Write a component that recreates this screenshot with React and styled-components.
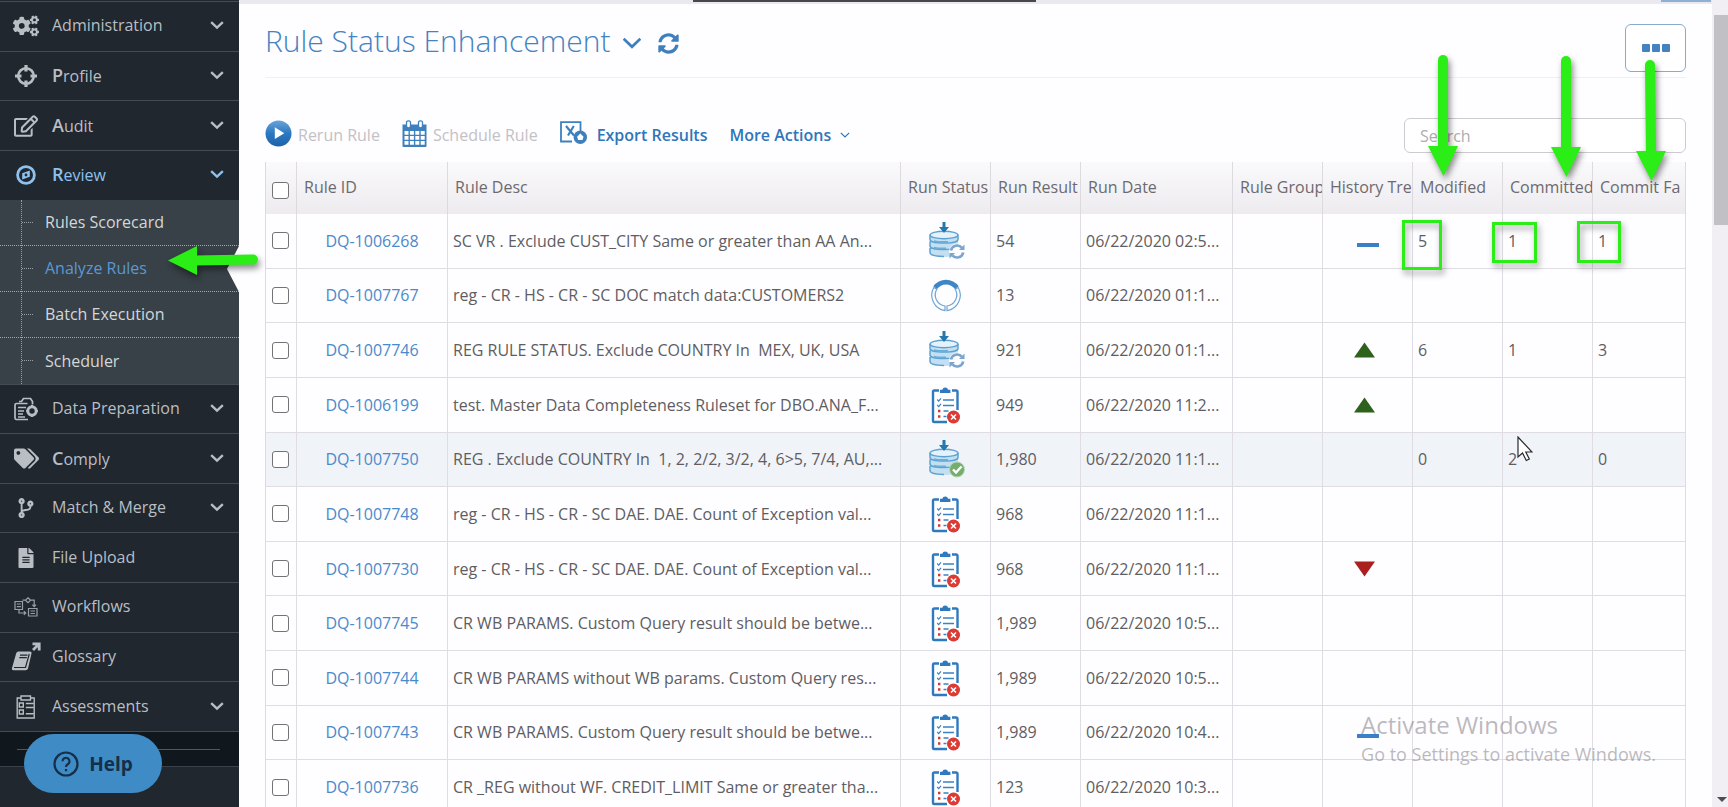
import { useState } from "react";
import styled, { createGlobalStyle, css } from "styled-components";
import {
  FaCogs,
  FaRegEdit,
  FaTags,
  FaCodeBranch,
  FaFileAlt,
  FaSyncAlt,
} from "react-icons/fa";

const GlobalStyle = createGlobalStyle`
  *, *::before, *::after {
    box-sizing: border-box;
  }
  body {
    margin: 0;
    overflow: hidden;
    background: #fefdff;
    color: #5e5d62;
    font-family: "Open Sans", sans-serif;
    font-size: 16px;
  }
  button, input {
    font-family: inherit;
  }
`;

/* ---------- icons ---------- */

const Chevron = ({ size = 12, stroke = 2 }) => (
  <svg width={size} height={size} viewBox="0 0 12 12" fill="none" aria-hidden="true">
    <path d="M1 3.5 6 8.3 11 3.5" stroke="currentColor" strokeWidth={stroke} />
  </svg>
);

const CrosshairsIcon = () => (
  <svg width="24" height="24" viewBox="0 0 24 24" fill="none" stroke="currentColor" aria-hidden="true">
    <circle cx="12" cy="12" r="7.800" strokeWidth="2.600" />
    <path d="M12 1v6.500M12 16.500V23M1 12h6.500M16.500 12H23" strokeWidth="3.200" />
  </svg>
);

const CompassIcon = () => (
  <svg width="20" height="20" viewBox="0 0 20 20" fill="none" aria-hidden="true">
    <circle cx="10" cy="10" r="8.4" stroke="currentColor" strokeWidth="2.8" />
    <path d="M6.2 14.4V8.2L13.8 5.4V11.8Z" fill="currentColor" />
    <circle cx="10" cy="10" r="1.4" fill="#20272f" />
  </svg>
);

const DataPrepIcon = () => (
  <svg width="24" height="24" viewBox="0 0 24 24" fill="none" stroke="currentColor" strokeWidth="1.7" aria-hidden="true">
    <path d="M5 4.500h2.500L9.500 1.500h7l2 3v3" />
    <path d="M13.500 6.500H2.500a1.500 1.500 0 0 0-1.500 1.500v13a1.500 1.500 0 0 0 1.500 1.500H14" />
    <path d="M4 10.500h8M4 14h6M4 17h5M4 20h7" strokeWidth="1.400" />
    <circle cx="18" cy="14" r="4.200" strokeWidth="3" />
    <path d="M18 8v2M18 18v2M12.200 14h2M21.800 14h2" strokeWidth="2" />
  </svg>
);

const WorkflowIcon = () => (
  <svg width="24" height="20" viewBox="0 0 24 20" fill="none" stroke="currentColor" strokeWidth="1.2" opacity="0.8" aria-hidden="true">
    <path d="M1 4.500h7.500v8H1zM2.800 7h4M2.800 9.600h4" />
    <path d="M14.500 11.500h8.500v7.500h-8.500zM16.500 14h4.500M16.500 16.500h4.500" />
    <path d="M14 .8l2.600 2.400L14 5.600l-2.600-2.400zM8.500 3.200h2.500M17 3.200h3.200v6M18.400 7.600l1.800 2 1.800-2" />
    <path d="M5 13v3h6.500M9.800 14.300l2 1.700-2 1.700" />
  </svg>
);

const GlossaryIcon = () => (
  <svg width="30" height="30" viewBox="0 0 30 30" fill="none" aria-hidden="true">
    <path d="M7.500 9.500H19a1.600 1.600 0 0 1 1.500 2L17 26.500a2.500 2.500 0 0 1-2.300 1.700H2.600A1.800 1.800 0 0 1 1 25.900L5.200 11.300a2.600 2.600 0 0 1 2.300-1.800z" fill="currentColor" />
    <path d="M9 13.200h7.500M8.300 15.600h7.500M3 25.500h11.500l3.800-13.500" stroke="#20272f" strokeWidth="1.200" />
    <path d="M22 8 27 3M21.500 1.800H28.200V8.500" stroke="currentColor" strokeWidth="2.800" />
  </svg>
);

const AssessmentIcon = () => (
  <svg width="20" height="24" viewBox="0 0 20 24" fill="none" stroke="currentColor" strokeWidth="1.400" aria-hidden="true">
    <path d="M5 3H1.200v20h17V3H14.500" />
    <path d="M5 1h9.500v4H5z" />
    <path d="M3.300 8h4v4h-4zM3.300 15h4v4h-4zM9.800 8.500h8M9.800 12.500h8M9.800 18.700h8" />
  </svg>
);

const PlayIcon = () => (
  <svg width="27" height="27" viewBox="0 0 27 27" aria-hidden="true">
    <defs>
      <linearGradient id="play" x1="0" y1="0" x2="0" y2="1">
        <stop offset="0" stopColor="#6aa3d6" />
        <stop offset="0.5" stopColor="#2b78c2" />
        <stop offset="1" stopColor="#1f62a8" />
      </linearGradient>
    </defs>
    <circle cx="13.500" cy="13.500" r="13" fill="url(#play)" />
    <path d="M9.800 7.300v11.800l9.500-5.900z" fill="#fff" />
  </svg>
);

const CalendarIcon = () => (
  <svg width="25" height="27" viewBox="0 0 25 27" aria-hidden="true">
    <path d="M.5 4.500h24V26a1 1 0 0 1-1 1h-22a1 1 0 0 1-1-1z" fill="#3e80be" />
    <rect x="4.500" y=".8" width="4" height="7" rx="1.800" fill="#fff" stroke="#3e80be" strokeWidth="1.300" />
    <rect x="16.500" y=".8" width="4" height="7" rx="1.800" fill="#fff" stroke="#3e80be" strokeWidth="1.300" />
    <path
      fill="#fff"
      d="M2.500 11h4v3.700h-4zM7.900 11h4v3.700h-4zM13.300 11h4v3.700h-4zM18.700 11h4v3.700h-4zM2.500 16h4v3.700h-4zM7.900 16h4v3.700h-4zM13.300 16h4v3.700h-4zM18.700 16h4v3.700h-4zM2.500 21h4v3.700h-4zM7.900 21h4v3.700h-4zM13.300 21h4v3.700h-4zM18.700 21h4v3.700h-4z"
    />
  </svg>
);

const ExportIcon = () => (
  <svg width="27" height="24" viewBox="0 0 27 24" fill="none" aria-hidden="true">
    <path d="M12 20.500H1V1.200h19.500v9" stroke="#3e80be" strokeWidth="1.800" />
    <path d="M6 5l8 9.500M13.800 5 8 14.500" stroke="#3e80be" strokeWidth="2.200" />
    <circle cx="20.300" cy="16.200" r="6.700" fill="#3e80be" />
    <path d="M20.300 12.500l3.200 3.200-1 3.300h-4.400l-1-3.300z" fill="#fff" />
  </svg>
);

const DatabaseIcon = ({ badge }) => (
  <svg width="38" height="38" viewBox="0 0 38 38" fill="none" aria-hidden="true">
    <path d="M3 13v17c0 3 6 5 14 5s14-2 14-5V13" fill="#c3e0f3" />
    <ellipse cx="17" cy="13" rx="14" ry="3.800" fill="#e4f2fb" stroke="#5fa2d1" strokeWidth="1.400" />
    <path
      d="M3 13v4.500c0 2.200 6 3.600 14 3.600s14-1.400 14-3.600V13M3 19.500V24c0 2.200 6 3.600 14 3.600s12-.800 14-2.600M3 26v4.500C3 33 9 34.400 17 34.400"
      stroke="#5fa2d1"
      strokeWidth="1.500"
    />
    <path d="M7 19c4 1 9 1 14 .700M7 25.500c4 1 8 1 12 .700" stroke="#6badd9" strokeWidth="1.600" />
    <path d="M15.500 0h3v5h3.500l-5 6-5-6h3.500z" fill="#2378ae" />
    {badge === "sync" ? (
      <>
        <circle cx="30" cy="29.500" r="8" fill="#fdfdff" />
        <path d="M24 28.500a6.200 6.200 0 0 1 10.800-2.800M36.200 30.500a6.200 6.200 0 0 1-10.800 2.800" stroke="#7ba4cf" strokeWidth="2.600" />
        <path d="M37.500 22.500v5.500h-5.500zM22.500 36.500V31H28z" fill="#7ba4cf" />
      </>
    ) : (
      <>
        <circle cx="30" cy="29.500" r="7.500" fill="#74ad6c" stroke="#b9d6b6" strokeWidth="1" />
        <path d="M26 29.500l3 3 5.500-6" stroke="#fff" strokeWidth="2.400" />
      </>
    )}
  </svg>
);

const RunningIcon = () => (
  <svg width="34" height="34" viewBox="0 0 34 34" fill="none" aria-hidden="true">
    <path
      d="M4.800 9.500A15.600 15.600 0 0 0 16 32.600V28A11.200 11.200 0 0 1 7.800 11.200zM29.200 9.500A15.600 15.600 0 0 1 18 32.600V28a11.200 11.200 0 0 0 8.200-16.800z"
      stroke="#6fa6d6"
      strokeWidth="1.200"
    />
    <path d="M4.300 8.300a15.700 15.700 0 0 1 25.400 0L26 11a11.300 11.300 0 0 0-18 0z" fill="#3f86c6" />
  </svg>
);

const ClipboardIcon = () => (
  <svg width="38" height="38" viewBox="0 0 38 38" fill="none" aria-hidden="true">
    <path d="M6 5h25v31H6z" fill="#fff" />
    <path d="M12 4.500H7.300A1.300 1.300 0 0 0 6 5.800v28.900A1.300 1.300 0 0 0 7.300 36H20M25 4.500h4.200a1.300 1.300 0 0 1 1.300 1.300V24" stroke="#2f7abf" strokeWidth="2.400" />
    <path d="M13 7V3.800h2.300a3 3 0 0 1 5.800 0h2.300V7z" fill="#2f7abf" />
    <path d="M16 14h11M16 19.500h11M16.500 25h5M16.500 30.500h3" stroke="#3b82c4" strokeWidth="1.500" />
    <path d="M10.200 13.500l1.500 1.600 2.300-2.800M10.200 19l1.500 1.600 2.300-2.800" stroke="#3b82c4" strokeWidth="1.200" />
    <path d="M11 23.800h2.400v2.400H11zM11 29.300h2.400v2.400H11z" fill="#d8352f" />
    <circle cx="26.500" cy="31" r="6.500" fill="#dc3a34" />
    <path d="M24 28.500l5 5M29 28.500l-5 5" stroke="#fff" strokeWidth="1.600" />
  </svg>
);

const TrendIcon = ({ trend }) => (
  <svg width="30" height="16" viewBox="0 0 30 16" aria-hidden="true">
    {trend === "up" && <path d="M1 15.500 11.500.5 22 15.500z" fill="#2d611c" />}
    {trend === "down" && <path d="M1 .5h21L11.500 15.500z" fill="#a8211f" />}
    {trend === "flat" && <path d="M4 10h22v4H4z" fill="#3a80c8" />}
  </svg>
);

/* ---------- shell ---------- */

const Page = styled.div`
  position: relative;
  display: flex;
  height: 100vh;
  overflow: hidden;
`;

const Sidebar = styled.nav`
  display: flex;
  flex-direction: column;
  flex: none;
  width: 239px;
  background: #20272f;
  padding-top: 1px;
`;

const NavItem = styled.a`
  display: flex;
  flex: 1 0 40px;
  align-items: center;
  border-top: 1px solid #444c54;
  padding-right: 15px;
  padding-bottom: 2px;
  color: ${(p) => (p.$active ? "#8fc1ee" : "#b9bec4")};
  text-decoration: none;

  > span {
    flex: 1;
  }
`;

const NavIcon = styled.i`
  display: flex;
  justify-content: center;
  width: 52px;
  padding-top: 2px;
  font-size: 24px;
`;

const Initial = styled.b`
  font-size: 18px;
  font-weight: 600;
`;

const SubMenu = styled.div`
  flex: none;
  position: relative;
  background: #384147;

  &::before {
    content: "";
    position: absolute;
    top: 0;
    bottom: 0;
    left: 21px;
    border-left: 1px dotted #98a0a6;
  }
`;

const SubItem = styled.a`
  position: relative;
  display: flex;
  align-items: center;
  height: 46px;
  padding-left: 45px;
  border-bottom: 1px dotted #a0a7ac;
  color: ${(p) => (p.$active ? "#5a98d4" : "#d3d7da")};
  text-decoration: none;

  &:last-child {
    border-bottom: 0;
  }

  &::before {
    content: "";
    position: absolute;
    left: 22px;
    width: 11px;
    border-top: 1px dotted #98a0a6;
  }

  ${(p) =>
    p.$active &&
    css`
      &::after {
        content: "";
        position: absolute;
        right: 0;
        top: 0;
        border: solid transparent;
        border-width: 23px 12px 23px 0;
        border-right-color: #fefdff;
      }
    `}
`;

const SidebarFoot = styled.div`
  flex: none;
  height: 76px;
  border-top: 1px solid #444c54;

  &::before {
    content: "";
    display: block;
    height: 35px;
    border-bottom: 1px solid #39424a;
    background: linear-gradient(#4c5a5f, #4c5a5f) 17px 17px / 203px 1px no-repeat #11181d;
  }
`;

const HelpButton = styled.button`
  position: absolute;
  left: 24px;
  bottom: 14px;
  display: flex;
  align-items: center;
  justify-content: center;
  gap: 10px;
  width: 138px;
  height: 59px;
  border: 0;
  border-radius: 30px;
  background: #3f8bc6;
  color: #142f49;
  font-size: 19px;
  font-weight: 700;
`;

const Main = styled.main`
  flex: 1;
  min-width: 0;
  border-top: 4px solid #eae9ef;
  padding: 0 26px;
`;

const Scrollbar = styled.div`
  display: flex;
  flex-direction: column;
  align-items: flex-end;
  justify-content: space-between;
  flex: none;
  width: 16px;
  padding: 15px 0 5px 2px;
  background: #f1eff4;
`;

const Thumb = styled.div`
  width: 100%;
  height: 210px;
  background: #c1c0c4;
`;

const DownArrow = styled.div`
  margin-right: 1px;
  border: 5px solid transparent;
  border-top-color: #4e4e52;
  border-bottom: 0;
`;

/* ---------- header and toolbar ---------- */

const Header = styled.header`
  display: flex;
  align-items: center;
  height: 74px;
  padding-top: 5px;
  border-bottom: 1px solid #f1eff4;
  color: #4583c0;

  h1 {
    margin: 0 12px 0 0;
    padding-bottom: 4px;
    font-size: 30px;
    font-weight: 300;
    line-height: 40px;
  }
`;

const IconButton = styled.button`
  display: flex;
  padding: 0;
  margin-right: 16px;
  border: 0;
  background: none;
  color: #3e80be;
  font-size: 21px;
`;

const DotsButton = styled.button`
  display: flex;
  align-items: center;
  justify-content: center;
  gap: 2px;
  width: 61px;
  height: 48px;
  margin: 10px 0 0 auto;
  border: 1px solid #86abd0;
  border-radius: 6px;
  background: #fff;

  i {
    width: 8px;
    height: 8px;
    border-radius: 1px;
    background: #4583c0;
  }
`;

const Toolbar = styled.div`
  display: flex;
  align-items: center;
  height: 84px;
  padding-top: 31px;
`;

const ToolButton = styled.button`
  display: flex;
  align-items: center;
  gap: ${(p) => p.$gap || 6}px;
  height: 32px;
  margin: 0 22px 5px 0;
  padding: 0;
  border: 0;
  background: none;
  color: #2e76ba;
  font-size: 16px;
  font-weight: 600;
  white-space: nowrap;

  &:disabled {
    color: #c3c1c6;
    font-weight: 400;
  }

  span {
    padding-top: 4px;
  }

  span + svg {
    margin-top: 4px;
  }
`;

const SearchInput = styled.input`
  width: 282px;
  height: 35px;
  margin-left: auto;
  padding: 0 15px;
  border: 1px solid #cdcbd1;
  border-radius: 6px;
  background: #fff;
  font-size: 16px;

  &::placeholder {
    color: #aeacb1;
  }
`;

/* ---------- grid ---------- */

const Table = styled.table`
  width: 100%;
  height: calc(100vh - 154px);
  table-layout: fixed;
  border-collapse: separate;
  border-spacing: 0;
  border-left: 1px solid #dcd9df;
`;

const Th = styled.th`
  height: 52px;
  padding: ${(p) => (p.$check ? "4px 0 0 6px" : "0 0 2px 7px")};
  border-right: 1px solid #dcd9df;
  background: linear-gradient(#faf9fb, #edebef);
  color: #6c6a70;
  font-weight: 500;
  text-align: left;
  white-space: nowrap;
  overflow: hidden;
`;

const Td = styled.td`
  height: 54px;
  padding: 0 ${(p) => (p.$check ? 6 : 5)}px;
  border-right: 1px solid #e0dce3;
  border-bottom: 1px solid #e0dce3;
  text-align: ${(p) => p.$align || "left"};
  white-space: pre;
  overflow: hidden;
  text-overflow: ellipsis;

  svg {
    display: block;
    margin: 0 auto;
  }
`;

const Tr = styled.tr`
  background: ${(p) => (p.$hovered ? "#f0f3f8" : "transparent")};
`;

const RuleLink = styled.a`
  color: #4a8acb;
  text-decoration: none;
`;

const Checkbox = styled.input.attrs({ type: "checkbox" })`
  appearance: none;
  display: block;
  width: 17px;
  height: 17px;
  margin: 0;
  border: 1px solid #737277;
  border-radius: 3px;
  background: #fff;

  &:checked {
    background: #3e80be;
  }
`;

/* ---------- overlays ---------- */

const Annotation = styled.svg`
  position: absolute;
  top: ${(p) => p.$top}px;
  ${(p) => (p.$left ? `left: ${p.$left}px;` : `right: ${p.$right}px;`)}
  overflow: visible;
  pointer-events: none;
  filter: drop-shadow(2px 4px 3px rgba(0, 0, 0, 0.45));
`;

const Highlight = styled.div`
  position: absolute;
  top: ${(p) => p.$top}px;
  right: ${(p) => p.$right}px;
  width: ${(p) => p.$width}px;
  height: ${(p) => p.$height}px;
  border: 3px solid #2bee16;
  pointer-events: none;
  filter: drop-shadow(2px 4px 3px rgba(0, 0, 0, 0.4));
`;

const Watermark = styled.div`
  position: absolute;
  right: 72px;
  bottom: 40px;
  color: rgba(120, 118, 124, 0.5);
  font-size: 18px;
  line-height: 26px;
  pointer-events: none;

  strong {
    display: block;
    font-size: 24px;
    font-weight: 400;
    line-height: 32px;
  }
`;

const Cursor = styled.svg`
  position: absolute;
  top: 436px;
  right: 195px;
  pointer-events: none;
`;

const TopTab = styled.div`
  position: absolute;
  top: 0;
  right: ${(p) => p.$right}px;
  width: ${(p) => p.$width}px;
  height: 2px;
  background: ${(p) => p.$color};
`;

const navTop = [
  { label: "Administration", icon: <FaCogs size={26} />, open: true },
  { label: "Profile", icon: <CrosshairsIcon />, open: true, initial: true },
  { label: "Audit", icon: <FaRegEdit />, open: true, initial: true },
  { label: "Review", icon: <CompassIcon />, open: true, initial: true, active: true },
];

const subNav = ["Rules Scorecard", "Analyze Rules", "Batch Execution", "Scheduler"];

const navBottom = [
  { label: "Data Preparation", icon: <DataPrepIcon />, open: true },
  { label: "Comply", icon: <FaTags size={25} />, open: true, initial: true },
  { label: "Match & Merge", icon: <FaCodeBranch size={20} />, open: true },
  { label: "File Upload", icon: <FaFileAlt size={20} /> },
  { label: "Workflows", icon: <WorkflowIcon /> },
  { label: "Glossary", icon: <GlossaryIcon /> },
  { label: "Assessments", icon: <AssessmentIcon />, open: true },
];

const columns = [
  { label: "Rule ID", width: 151 },
  { label: "Rule Desc" },
  { label: "Run Status", width: 90 },
  { label: "Run Result", width: 90 },
  { label: "Run Date", width: 152 },
  { label: "Rule Group", width: 90 },
  { label: "History Tre", width: 90 },
  { label: "Modified", width: 90 },
  { label: "Committed", width: 90 },
  { label: "Commit Fa", width: 93 },
];

const rules = [
  { id: "DQ-1006268", desc: "SC VR . Exclude CUST_CITY Same or greater than AA An...", status: "sync", result: "54", date: "06/22/2020 02:5...", trend: "flat", counts: [5, 1, 1] },
  { id: "DQ-1007767", desc: "reg - CR - HS - CR - SC DOC match data:CUSTOMERS2", status: "running", result: "13", date: "06/22/2020 01:1..." },
  { id: "DQ-1007746", desc: "REG RULE STATUS. Exclude COUNTRY In  MEX, UK, USA", status: "sync", result: "921", date: "06/22/2020 01:1...", trend: "up", counts: [6, 1, 3] },
  { id: "DQ-1006199", desc: "test. Master Data Completeness Ruleset for DBO.ANA_F...", status: "failed", result: "949", date: "06/22/2020 11:2...", trend: "up" },
  { id: "DQ-1007750", desc: "REG . Exclude COUNTRY In  1, 2, 2/2, 3/2, 4, 6>5, 7/4, AU,...", status: "done", result: "1,980", date: "06/22/2020 11:1...", counts: [0, 2, 0], hovered: true },
  { id: "DQ-1007748", desc: "reg - CR - HS - CR - SC DAE. DAE. Count of Exception val...", status: "failed", result: "968", date: "06/22/2020 11:1..." },
  { id: "DQ-1007730", desc: "reg - CR - HS - CR - SC DAE. DAE. Count of Exception val...", status: "failed", result: "968", date: "06/22/2020 11:1...", trend: "down" },
  { id: "DQ-1007745", desc: "CR WB PARAMS. Custom Query result should be betwe...", status: "failed", result: "1,989", date: "06/22/2020 10:5..." },
  { id: "DQ-1007744", desc: "CR WB PARAMS without WB params. Custom Query res...", status: "failed", result: "1,989", date: "06/22/2020 10:5..." },
  { id: "DQ-1007743", desc: "CR WB PARAMS. Custom Query result should be betwe...", status: "failed", result: "1,989", date: "06/22/2020 10:4...", trend: "flat" },
  { id: "DQ-1007736", desc: "CR _REG without WF. CREDIT_LIMIT Same or greater tha...", status: "failed", result: "123", date: "06/22/2020 10:3..." },
];

const StatusIcon = ({ status }) => {
  if (status === "running") return <RunningIcon />;
  if (status === "failed") return <ClipboardIcon />;
  return <DatabaseIcon badge={status} />;
};

const NavLink = ({ item }) => (
  <NavItem href="#" $active={item.active}>
    <NavIcon>{item.icon}</NavIcon>
    <span>
      {item.initial ? (
        <>
          <Initial>{item.label[0]}</Initial>
          {item.label.slice(1)}
        </>
      ) : (
        item.label
      )}
    </span>
    {item.open && <Chevron size={14} />}
  </NavItem>
);

const DownPointer = ({ top, right, lean = 0 }) => (
  <Annotation $top={top} $right={right} width="30" height="121" viewBox="0 0 30 121" aria-hidden="true">
    <path d={`M${15 - lean} 5V8L15 95`} fill="none" stroke="#2bee16" strokeWidth="10" strokeLinecap="round" />
    <path d="M0 91h30L15.500 121z" fill="#2bee16" />
  </Annotation>
);

export default function App() {
  const [search, setSearch] = useState("");

  return (
    <Page>
      <GlobalStyle />
      <Sidebar>
        {navTop.map((item) => (
          <NavLink key={item.label} item={item} />
        ))}
        <SubMenu>
          {subNav.map((label) => (
            <SubItem key={label} href="#" $active={label === "Analyze Rules"}>
              {label}
            </SubItem>
          ))}
        </SubMenu>
        {navBottom.map((item) => (
          <NavLink key={item.label} item={item} />
        ))}
        <SidebarFoot />
      </Sidebar>

      <Main>
        <Header>
          <h1>Rule Status Enhancement</h1>
          <IconButton aria-label="Change view">
            <Chevron size={20} stroke={1.6} />
          </IconButton>
          <IconButton aria-label="Refresh">
            <FaSyncAlt />
          </IconButton>
          <DotsButton aria-label="Options">
            <i />
            <i />
            <i />
          </DotsButton>
        </Header>

        <Toolbar>
          <ToolButton disabled>
            <PlayIcon />
            <span>Rerun Rule</span>
          </ToolButton>
          <ToolButton disabled>
            <CalendarIcon />
            <span>Schedule Rule</span>
          </ToolButton>
          <ToolButton $gap={10}>
            <ExportIcon />
            <span>Export Results</span>
          </ToolButton>
          <ToolButton $gap={9}>
            <span>More Actions</span>
            <Chevron size={10} stroke={1.5} />
          </ToolButton>
          <SearchInput
            aria-label="Search"
            placeholder="Search"
            value={search}
            onChange={(e) => setSearch(e.target.value)}
          />
        </Toolbar>

        <Table>
          <colgroup>
            <col width={31} />
            {columns.map((c) => (
              <col key={c.label} width={c.width} />
            ))}
          </colgroup>
          <thead>
            <tr>
              <Th $check>
                <Checkbox aria-label="Select all rules" />
              </Th>
              {columns.map((c) => (
                <Th key={c.label}>{c.label}</Th>
              ))}
            </tr>
          </thead>
          <tbody>
            {rules.map((rule) => (
              <Tr key={rule.id} $hovered={rule.hovered}>
                <Td $check>
                  <Checkbox aria-label={`Select ${rule.id}`} />
                </Td>
                <Td $align="center">
                  <RuleLink href="#">{rule.id}</RuleLink>
                </Td>
                <Td>{rule.desc}</Td>
                <Td>
                  <StatusIcon status={rule.status} />
                </Td>
                <Td>{rule.result}</Td>
                <Td>{rule.date}</Td>
                <Td />
                <Td>{rule.trend && <TrendIcon trend={rule.trend} />}</Td>
                <Td>{rule.counts?.[0]}</Td>
                <Td>{rule.counts?.[1]}</Td>
                <Td>{rule.counts?.[2]}</Td>
              </Tr>
            ))}
          </tbody>
        </Table>
      </Main>

      <Scrollbar>
        <Thumb />
        <DownArrow />
      </Scrollbar>

      <HelpButton>
        <svg width="26" height="26" viewBox="0 0 26 26" fill="none" stroke="currentColor" strokeWidth="2.200" aria-hidden="true">
          <circle cx="13" cy="13" r="11.500" />
          <path d="M9.500 10.300a3.500 3.500 0 1 1 5.300 3c-1.200.7-1.800 1.200-1.800 2.700M13 18v2.300" />
        </svg>
        Help
      </HelpButton>

      <TopTab $right={692} $width={343} $color="#48474c" />
      <TopTab $right={17} $width={50} $color="#8fb0d3" />

      <Annotation $top={246} $left={168} width="90" height="30" viewBox="0 0 90 30" aria-hidden="true">
        <path d="M85 13.500 26 14.500" stroke="#2bee16" strokeWidth="10" strokeLinecap="round" />
        <path d="M0 14.500 29 0v29z" fill="#2bee16" />
      </Annotation>
      <DownPointer top={55} right={270} />
      <DownPointer top={56} right={147} />
      <DownPointer top={60} right={62} lean={1} />
      <Highlight $top={220} $right={286} $width={40} $height={50} />
      <Highlight $top={222} $right={191} $width={45} $height={41} />
      <Highlight $top={221} $right={107} $width={44} $height={42} />

      <Cursor width="16" height="26" viewBox="0 0 16 26" aria-hidden="true">
        <path d="M1 1v20l4.500-4 3.800 7.500 3-1.500L8.800 16H15z" fill="#fff" stroke="#2a2a2e" strokeWidth="1.200" />
      </Cursor>

      <Watermark>
        <strong>Activate Windows</strong>
        Go to Settings to activate Windows.
      </Watermark>
    </Page>
  );
}
